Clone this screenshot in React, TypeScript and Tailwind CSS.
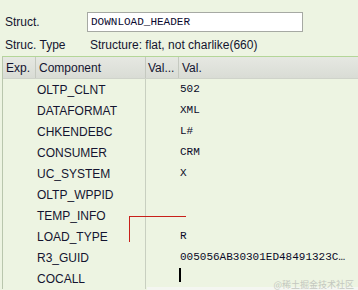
import React from 'react';

const rows: [string, string][] = [
  ['OLTP_CLNT', '502'],
  ['DATAFORMAT', 'XML'],
  ['CHKENDEBC', 'L#'],
  ['CONSUMER', 'CRM'],
  ['UC_SYSTEM', 'X'],
  ['OLTP_WPPID', ''],
  ['TEMP_INFO', ''],
  ['LOAD_TYPE', 'R'],
  ['R3_GUID', '005056AB30301ED48491323C…'],
  ['COCALL', ''],
];

export default function App() {
  return (
    <div className="relative w-[358px] h-[290px] overflow-hidden bg-[#edf4e2] text-[12px] text-[#141430] font-['Liberation_Sans',Arial,sans-serif]">
      {/* Header fields */}
      <div className="flex items-center h-[20px] mt-[12px] pl-[5px]">
        <span className="w-[82px]">Struct.</span>
        <div className="w-[216px] h-[20px] bg-white border border-[#a6a9a3] flex items-center pl-[3px] font-['Liberation_Mono',monospace] text-[11px] text-[#0a0a30]">
          DOWNLOAD_HEADER
        </div>
      </div>
      <div className="flex items-center h-[20px] mt-[3px] pl-[5px]">
        <span className="w-[85px]">Struc. Type</span>
        <span>Structure: flat, not charlike(660)</span>
      </div>

      {/* Table */}
      <div className="mt-[1px] border-t border-[#b4d698] ml-[2px] border-l border-l-[#b9c6ad]">
        <div className="flex h-[22px] bg-gradient-to-b from-[#e6e8e2] to-[#d9dcd5] border-b border-[#cfd3ca]">
          <div className="w-[33px] pl-[3px] flex items-center border-r border-[#c5c9c0]">Exp.</div>
          <div className="w-[110px] pl-[3px] flex items-center border-r border-[#c5c9c0]">Component</div>
          <div className="w-[33px] pl-[2px] flex items-center border-r border-[#c5c9c0]">Val...</div>
          <div className="flex-1 pl-[3px] flex items-center">Val.</div>
        </div>
        {rows.map(([name, val]) => (
          <div key={name} className="flex h-[21px]">
            <div className="w-[33px]" />
            <div className="w-[110px] pl-[1px] flex items-center border-r border-[#c8cfc0]">{name}</div>
            <div className="w-[33px]" />
            <div className="flex-1 pl-[1px] flex items-center font-['Liberation_Mono',monospace] text-[11px] text-[#0a0a28]">
              {val}
            </div>
          </div>
        ))}
      </div>

      {/* red drawing mark */}
      <div className="absolute left-[129px] top-[216px] w-[57px] h-[26px] border-t border-l border-[#c8201a]" />
      {/* text cursor */}
      <div className="absolute left-[179px] top-[268px] w-[2px] h-[14px] bg-black" />
      {/* bottom strip */}
      <div className="absolute left-[147px] right-0 top-[287px] h-[3px] bg-[#f4f6f1]" />
      {/* watermark */}
      <div className="absolute right-[4px] top-[278px] text-[9px] text-[#c4c8c0] font-['Noto_Sans_CJK_SC',sans-serif]">
        @稀土掘金技术社区
      </div>
    </div>
  );
}
